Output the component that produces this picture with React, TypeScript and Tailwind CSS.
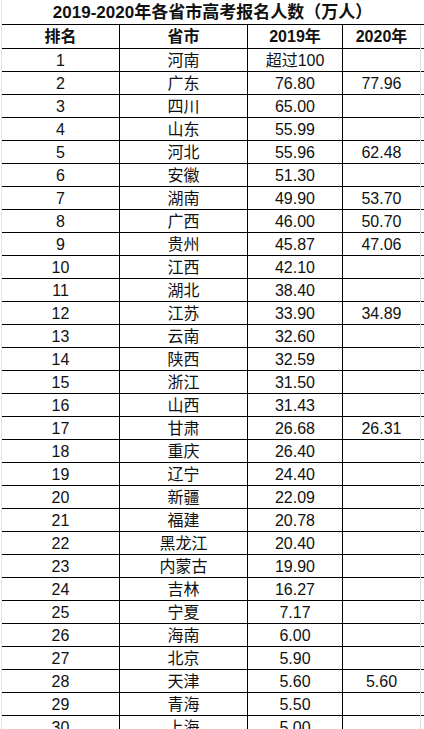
const rows: [string, string, string, string][] = [
  ['1', '河南', '超过100', ''],
  ['2', '广东', '76.80', '77.96'],
  ['3', '四川', '65.00', ''],
  ['4', '山东', '55.99', ''],
  ['5', '河北', '55.96', '62.48'],
  ['6', '安徽', '51.30', ''],
  ['7', '湖南', '49.90', '53.70'],
  ['8', '广西', '46.00', '50.70'],
  ['9', '贵州', '45.87', '47.06'],
  ['10', '江西', '42.10', ''],
  ['11', '湖北', '38.40', ''],
  ['12', '江苏', '33.90', '34.89'],
  ['13', '云南', '32.60', ''],
  ['14', '陕西', '32.59', ''],
  ['15', '浙江', '31.50', ''],
  ['16', '山西', '31.43', ''],
  ['17', '甘肃', '26.68', '26.31'],
  ['18', '重庆', '26.40', ''],
  ['19', '辽宁', '24.40', ''],
  ['20', '新疆', '22.09', ''],
  ['21', '福建', '20.78', ''],
  ['22', '黑龙江', '20.40', ''],
  ['23', '内蒙古', '19.90', ''],
  ['24', '吉林', '16.27', ''],
  ['25', '宁夏', '7.17', ''],
  ['26', '海南', '6.00', ''],
  ['27', '北京', '5.90', ''],
  ['28', '天津', '5.60', '5.60'],
  ['29', '青海', '5.50', ''],
  ['30', '上海', '5.00', ''],
];

const font = "font-['Liberation_Sans','Noto_Sans_CJK_SC',sans-serif]";
const cols = 'grid grid-cols-[118px_128px_95px_78px_5px]';

function Row({ cells, bold, h }: { cells: string[]; bold?: boolean; h: string }) {
  return (
    <div className={`${cols} ${h} border-b border-black`}>
      {cells.map((c, i) => (
        <div
          key={i}
          className={`flex items-center justify-center whitespace-nowrap ${
            i < 3 ? 'border-r border-black' : ''
          } ${i === 3 ? 'border-r border-[#dcdcdc]' : ''} ${
            bold ? 'font-bold text-[16px]' : 'text-[16px]'
          }`}
        >
          {c}
        </div>
      ))}
      <div />
    </div>
  );
}

export default function App() {
  return (
    <div className={`w-[424px] h-[729px] overflow-hidden bg-white text-[#111] ${font}`}>
      <div className="border-l border-[#e2e2e2] ml-[1px]">
        <div className="h-[25px] border-b border-black flex items-center justify-center pr-[1px]">
          <span className="text-[17px] font-bold leading-none">2019-2020年各省市高考报名人数（万人）</span>
        </div>
        <Row cells={['排名', '省市', '2019年', '2020年']} bold h="h-[24px]" />
        {rows.map((r) => (
          <Row key={r[0]} cells={r} h="h-[23px]" />
        ))}
      </div>
    </div>
  );
}
